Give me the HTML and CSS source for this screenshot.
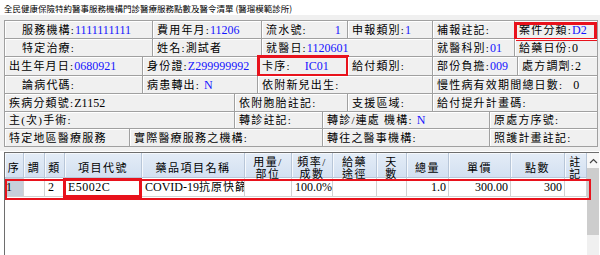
FILE: index.html
```html
<!DOCTYPE html>
<html lang="zh-Hant">
<head>
<meta charset="utf-8">
<title>門診醫療服務點數及醫令清單</title>
<link rel="stylesheet" href="styles.css">
</head>
<body>
<div class="title">全民健康保險特約醫事服務機構門診醫療服務點數及醫令清單 (醫瑠模範診所)</div>
<div class="form">
  <div class="grid">
    <div class="row h18">
      <div class="cell w148 ind"><span class="l">服務機構:</span><span class="b">1111111111</span></div>
      <div class="cell w109"><span class="l">費用年月:</span><span class="b">11206</span></div>
      <div class="cell w86"><span class="l">流水號:</span><span class="b sp1">1</span></div>
      <div class="cell w85"><span class="l">申報類別:</span><span class="b">1</span></div>
      <div class="cell w82"><span class="l">補報註記:</span></div>
      <div class="cell w83 mark-case"><span class="l">案件分類:</span><span class="b">D2</span></div>
    </div>
    <div class="row h18">
      <div class="cell w148 ind"><span class="l">特定治療:</span></div>
      <div class="cell w109"><span class="l">姓名:</span><span class="l">測試者</span></div>
      <div class="cell w171"><span class="l">就醫日:</span><span class="b">1120601</span></div>
      <div class="cell w82"><span class="l">就醫科別:</span><span class="b">01</span></div>
      <div class="cell w83"><span class="l">給藥日份:</span><span>0</span></div>
    </div>
    <div class="row h19">
      <div class="cell w138"><span class="l">出生年月日:</span><span class="b">0680921</span></div>
      <div class="cell w115"><span class="l">身份證:</span><span class="b">Z299999992</span></div>
      <div class="cell w90 mark-card"><span class="l">卡序:</span><span class="b sp2">IC01</span></div>
      <div class="cell w85"><span class="l">給付類別:</span></div>
      <div class="cell w85"><span class="l">部份負擔:</span><span class="b">009</span></div>
      <div class="cell w80"><span class="l">處方調劑:</span><span>2</span></div>
    </div>
    <div class="row h18">
      <div class="cell w138 ind"><span class="l">論病代碼:</span></div>
      <div class="cell w115"><span class="l">病患轉出:</span><span class="b sp3">N</span></div>
      <div class="cell w175"><span class="l">依附新兒出生:</span></div>
      <div class="cell w165"><span class="l">慢性病有效期間總日數:</span><span class="sp4">0</span></div>
    </div>
    <div class="row h18">
      <div class="cell w230"><span class="l">疾病分類號:</span><span>Z1152</span></div>
      <div class="cell w113"><span class="l">依附胞胎註記:</span></div>
      <div class="cell w85"><span class="l">支援區域:</span></div>
      <div class="cell w165"><span class="l">給付提升計畫碼:</span></div>
    </div>
    <div class="row h17">
      <div class="cell w230"><span class="l">主(次)手術:</span></div>
      <div class="cell w88"><span class="l">轉診註記:</span></div>
      <div class="cell w167"><span class="l">轉診/連處 機構:</span><span class="b sp3">N</span></div>
      <div class="cell w108"><span class="l">原處方序號:</span></div>
    </div>
    <div class="row h18">
      <div class="cell w125"><span class="l">特定地區醫療服務</span></div>
      <div class="cell w193"><span class="l">實際醫療服務之機構:</span></div>
      <div class="cell w167"><span class="l">轉往之醫事機構:</span></div>
      <div class="cell w108"><span class="l">照護計畫註記:</span></div>
    </div>
  </div>
</div>
<div class="tablewrap">
  <div class="tbl">
    <div class="thead">
      <div class="th c1">序</div>
      <div class="th c2">調</div>
      <div class="th c3">類</div>
      <div class="th c4">項目代號</div>
      <div class="th c5">藥品項目名稱</div>
      <div class="th c6">用量/<br>部位</div>
      <div class="th c7">頻率/<br>成數</div>
      <div class="th c8">給藥<br>途徑</div>
      <div class="th c9">天<br>數</div>
      <div class="th c10">總量</div>
      <div class="th c11">單價</div>
      <div class="th c12">點數</div>
      <div class="th c13">註<br>記</div>
    </div>
    <div class="tr sel">
      <div class="td c1 cur">1</div>
      <div class="td c2"></div>
      <div class="td c3">2</div>
      <div class="td c4 mark-code">E5002C</div>
      <div class="td c5"><span>COVID-19</span><span class="zh">抗原快篩</span></div>
      <div class="td c6"></div>
      <div class="td c7 num">100.0%</div>
      <div class="td c8"></div>
      <div class="td c9"></div>
      <div class="td c10 num">1.0</div>
      <div class="td c11 num">300.00</div>
      <div class="td c12 num">300</div>
      <div class="td c13"></div>
    </div>
  </div>
  <div class="sb">
    <div class="sb-up"><svg width="9" height="6" viewBox="0 0 9 6"><polyline points="1,5 4.5,1.5 8,5" fill="none" stroke="#444" stroke-width="1.2"/></svg></div>
    <div class="sb-thumb"></div>
  </div>
</div>
</body>
</html>
```
FILE: styles.css
```css
* { box-sizing: border-box; }
html, body { margin: 0; padding: 0; }
body {
  width: 600px;
  height: 255px;
  overflow: hidden;
  background: #fff;
  font-family: "Liberation Serif", "Noto Sans CJK TC", serif;
  font-size: 12px;
  color: #000;
}
.title {
  height: 15px;
  padding: 3px 0 0 4px;
  font-family: "Noto Sans CJK TC", sans-serif;
  font-size: 8.5px;
  line-height: 10px;
  white-space: nowrap;
}
.form {
  background: #f0f0f0;
  padding: 5px 2px 4px 4px;
  border-bottom: 1px solid #fff;
}
.grid {
  border-top: 1px solid #a0a0a0;
  border-left: 1px solid #a0a0a0;
}
.row { display: flex; }
.h17 { height: 17px; }
.h18 { height: 18px; }
.h19 { height: 19px; }
.cell {
  position: relative;
  display: flex;
  align-items: center;
  padding-left: 4px;
  white-space: nowrap;
  border-right: 1px solid #a0a0a0;
  border-bottom: 1px solid #a0a0a0;
  box-shadow: inset 1px 1px #fff;
  line-height: 14px;
}
.ind { padding-left: 17px; }
.w80 { width: 80px; }
.w82 { width: 82px; }
.w83 { width: 83px; }
.w85 { width: 85px; }
.w86 { width: 86px; }
.w88 { width: 88px; }
.w90 { width: 90px; }
.w108 { width: 108px; }
.w109 { width: 109px; }
.w113 { width: 113px; }
.w115 { width: 115px; }
.w125 { width: 125px; }
.w138 { width: 138px; }
.w148 { width: 148px; }
.w165 { width: 165px; }
.w167 { width: 167px; }
.w171 { width: 171px; }
.w175 { width: 175px; }
.w193 { width: 193px; }
.w230 { width: 230px; }
.l { font-size: 11px; letter-spacing: 1.2px; }
.b { color: #1414ff; }
.sp1 { margin-left: 28px; }
.sp2 { margin-left: 14px; }
.sp3 { margin-left: 4px; }
.sp4 { margin-left: 10px; }

.mark-case::after,
.mark-card::after,
.mark-code::after,
.sel::after {
  content: "";
  position: absolute;
  pointer-events: none;
}
.mark-case::after {
  left: -1px; right: 0; top: 1px; bottom: -3px;
  border: 3px solid #e8121c;
}
.mark-card::after {
  left: -1px; right: -2px; top: -2px; bottom: -2px;
  border: 3px solid #e8121c;
}

.tablewrap {
  display: flex;
  height: 103px;
  margin-right: 1px;
}
.tbl {
  flex: 1;
  margin-left: 4px;
  border-left: 1px solid #6e6e6e;
  border-top: 1px solid #6e6e6e;
  background: #fff;
}
.thead, .tr { display: flex; }
.th {
  height: 25px;
  display: flex;
  align-items: center;
  justify-content: center;
  text-align: center;
  font-size: 11px;
  line-height: 12px;
  letter-spacing: 1.5px;
  background: linear-gradient(#e4ecf7, #d3e0f1);
  border-right: 1px solid #b8c6d8;
  border-bottom: 1px solid #b8c6d8;
  box-shadow: inset 1px 1px #f6f9fd;
  padding-top: 5px;
  white-space: nowrap;
}
.tr { position: relative; height: 19px; }
.td {
  position: relative;
  height: 19px;
  line-height: 18px;
  padding: 0 2px 0 3px;
  white-space: nowrap;
  overflow: hidden;
  border-right: 1px solid #d2d2d2;
  border-bottom: 1px solid #d2d2d2;
}
.zh { font-size: 11px; letter-spacing: 1px; }
.td.mark-code { overflow: visible; letter-spacing: 0.5px; }
.num { text-align: right; }
.cur { background: #c7cfda; padding-left: 1px; }
.c1 { width: 19px; }
.c2 { width: 21px; }
.c3 { width: 20px; }
.c4 { width: 77px; }
.c5 { width: 103px; }
.c6 { width: 47px; }
.c7 { width: 41px; }
.c8 { width: 44px; }
.c9 { width: 30px; }
.c10 { width: 42px; }
.c11 { width: 62px; }
.c12 { width: 54px; }
.c13 { width: 22px; }
.c7.num { padding-right: 1px; }
.sel::after {
  left: 0; top: 1px; width: 582px; height: 17px;
  border: 2px solid #e8121c;
}
.mark-code::after {
  left: -2px; right: -1px; top: 0; bottom: -2px;
  border: 3px solid #e8121c;
  z-index: 2;
}
.sb {
  width: 12px;
  background: #f0f0f0;
  border-top: 1px solid #6e6e6e;
}
.sb-up {
  height: 15px;
  display: flex;
  align-items: center;
  justify-content: center;
  background: #f7f7f7;
}
.sb-thumb {
  height: 67px;
  background: #cdcdcd;
}
```
